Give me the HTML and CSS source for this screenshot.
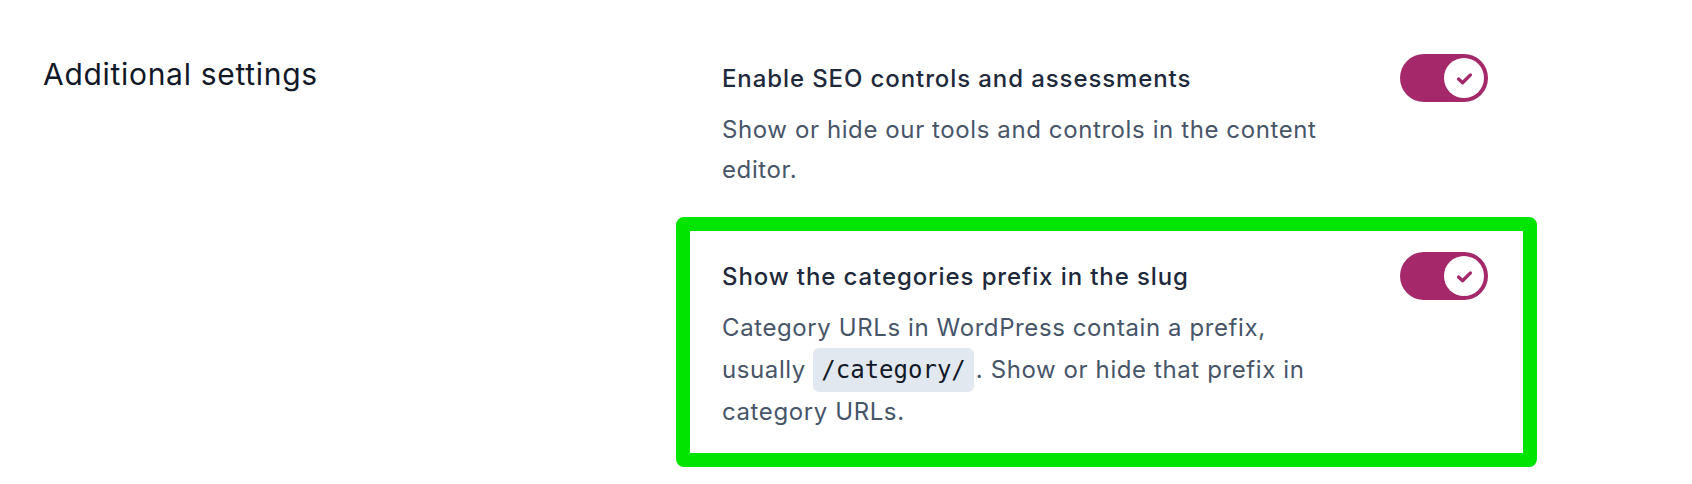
FILE: index.html
```html
<!DOCTYPE html>
<html lang="en">
  <head>
    <meta charset="UTF-8" />
    <title>Additional settings</title>
    <link rel="stylesheet" href="styles.css">
  </head>

  <body>
    <section class="settings">
      <h2 class="settings-title">Additional settings</h2>

      <ul class="settings-list">
        <li class="setting">
          <div class="setting-text">
            <span class="setting-label">Enable SEO controls and assessments</span>
            <p class="setting-desc">Show or hide our tools and controls in the content editor.</p>
          </div>
          <button class="toggle" type="button" aria-pressed="true">
            <span class="toggle-knob">
              <svg viewBox="0 0 16 16" width="19" height="19">
                <polyline points="3,8.5 6.4,11.6 13,5" />
              </svg>
            </span>
          </button>
        </li>
        <li class="setting setting--highlight">
          <div class="setting-text">
            <span class="setting-label">Show the categories prefix in the slug</span>
            <p class="setting-desc">Category URLs in WordPress contain a prefix, <span class="nowrap">usually&nbsp;<code>/category/</code>.</span> Show or hide that prefix in category URLs.</p>
          </div>
          <button class="toggle" type="button" aria-pressed="true">
            <span class="toggle-knob">
              <svg viewBox="0 0 16 16" width="19" height="19">
                <polyline points="3,8.5 6.4,11.6 13,5" />
              </svg>
            </span>
          </button>
        </li>
      </ul>
    </section>
  </body>
</html>
```

FILE: styles.css
```css
body {
  margin: 0;
  background: #fff;
  font-family: Inter, "Noto Sans", sans-serif;
}

.settings {
  display: grid;
  grid-template-columns: 679px 766px;
  padding: 54px 0 0 43px;
}

.settings-title {
  margin: 2px 0 0;
  font-size: 30px;
  line-height: 36px;
  font-weight: 400;
  letter-spacing: 0.7px;
  color: #111827;
}

.settings-list {
  list-style: none;
  margin: 0;
  padding: 0;
}

.setting {
  display: flex;
  justify-content: space-between;
  align-items: flex-start;
}

/* annotation box round the second row */
.setting--highlight {
  margin: 27px -49px 0 -46px;
  padding: 21px 35px 21px 32px;
  border: 14px solid #00e400;
  border-radius: 8px;
}

.setting-text {
  max-width: 640px;
  padding-top: 9px;
}

.setting-label {
  display: block;
  font-size: 24px;
  line-height: 32px;
  font-weight: 500;
  letter-spacing: 0.9px;
  color: #1e293b;
}

.setting-desc {
  margin: 15px 0 0;
  font-size: 24px;
  line-height: 40px;
  letter-spacing: 0.6px;
  color: #475569;
}

.nowrap {
  white-space: nowrap;
}

code {
  display: inline-block;
  padding: 4px 8px;
  margin-right: 2px;
  font-family: "DejaVu Sans Mono", "Liberation Mono", monospace;
  font-size: 24px;
  line-height: 36px;
  letter-spacing: 0;
  color: #111827;
  background: #e2e8f0;
  border-radius: 6px;
}

.toggle {
  flex: none;
  display: flex;
  justify-content: flex-end;
  align-items: center;
  width: 88px;
  height: 48px;
  padding: 0 4px;
  border: 0;
  border-radius: 24px;
  background: #a4286a;
}

.toggle-knob {
  display: flex;
  align-items: center;
  justify-content: center;
  width: 40px;
  height: 40px;
  border-radius: 50%;
  background: #fff;
}

.toggle-knob polyline {
  fill: none;
  stroke: #a4286a;
  stroke-width: 2.8;
  stroke-linecap: round;
  stroke-linejoin: round;
}
```
